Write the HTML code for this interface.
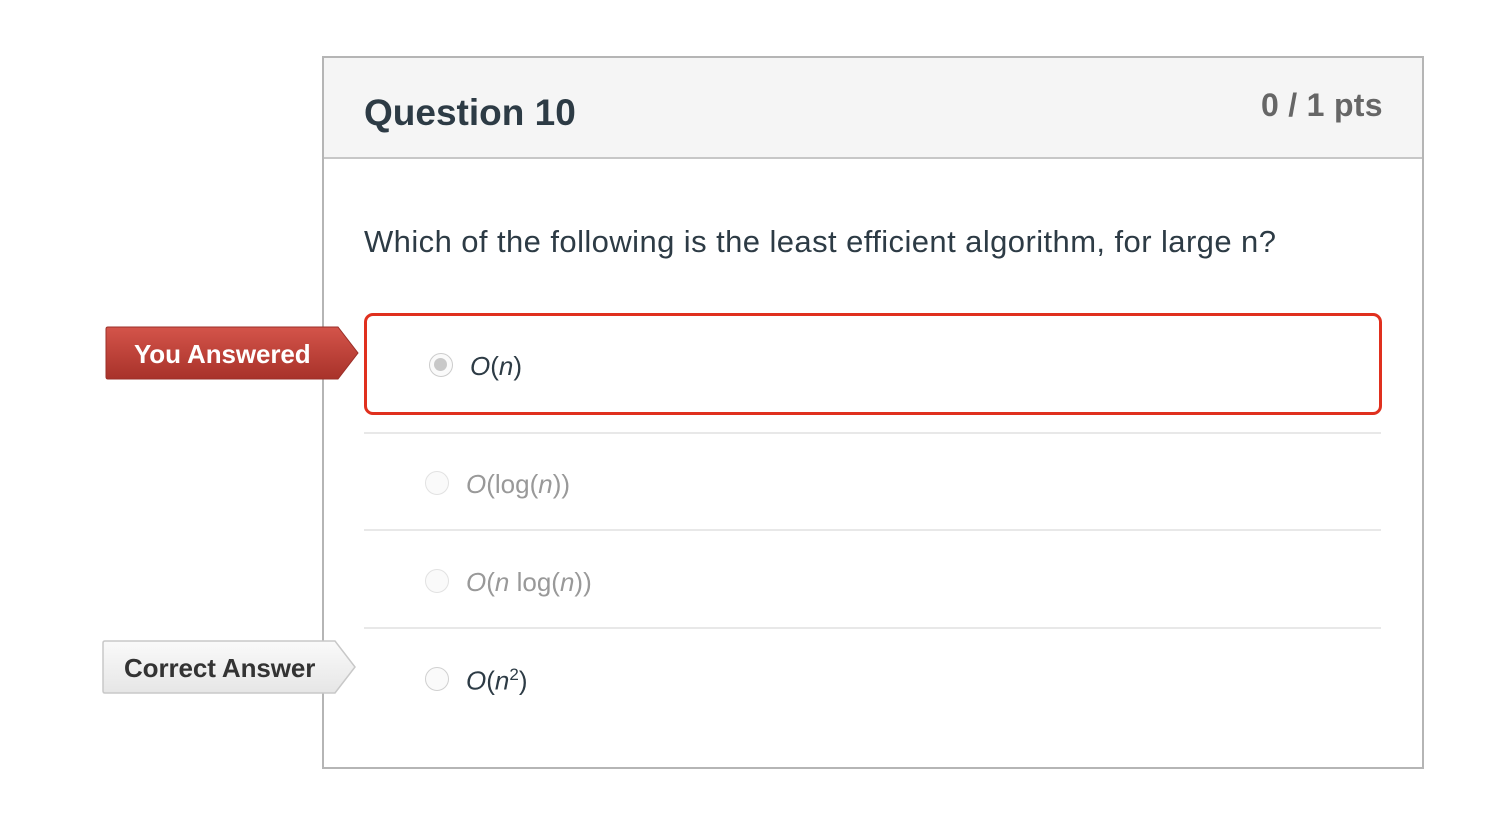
<!DOCTYPE html>
<html><head><style>
body{margin:0;width:1506px;height:826px;background:#fff;font-family:"Liberation Sans",sans-serif;position:relative;overflow:hidden}
.box{position:absolute;left:322px;top:56px;width:1098px;height:709px;border:2px solid #b5b5b5}
.hdr{position:absolute;left:0;top:0;width:1098px;height:99px;background:#f5f5f5;border-bottom:2px solid #c7c7c7}
.t{position:absolute;color:#2d3b45;white-space:nowrap}
.sep{position:absolute;left:364px;width:1017px;height:2px;background:#e8e8e8}
.radio{position:absolute;width:24px;height:24px;border:1.5px solid #d0d0d0;border-radius:50%;background:#fafafa;box-sizing:border-box}
.tag{position:absolute;height:52px;color:#fff;font-weight:bold;font-size:26px;line-height:52px}
</style></head><body>
<div class="box"><div class="hdr"></div></div>
<div class="t" style="left:364px;top:92px;font-size:37px;font-weight:bold">Question 10</div>
<div class="t" style="left:1261px;top:87px;font-size:32px;font-weight:bold;color:#666;letter-spacing:0.3px">0 / 1 pts</div>
<div class="t" style="left:364px;top:224px;font-size:31px;letter-spacing:0.42px">Which of the following is the least efficient algorithm, for large n?</div>
<div style="position:absolute;left:364px;top:313px;width:1012px;height:96px;border:3px solid #e0301e;border-radius:9px"></div>
<div class="radio" style="left:429px;top:353px;border-color:#ccc"><div style="position:absolute;left:4px;top:4px;width:13px;height:13px;border-radius:50%;background:#c8c8c8"></div></div>
<div class="t" style="left:470px;top:351px;font-size:26px"><i>O</i>(<i>n</i>)</div>
<div class="sep" style="top:432px"></div>
<div class="radio" style="left:425px;top:471px;border-color:#e2e2e2"></div>
<div class="t" style="left:466px;top:469px;font-size:26px;color:#999"><i>O</i>(log(<i>n</i>))</div>
<div class="sep" style="top:529px"></div>
<div class="radio" style="left:425px;top:569px;border-color:#e2e2e2"></div>
<div class="t" style="left:466px;top:567px;font-size:26px;color:#999"><i>O</i>(<i>n</i> log(<i>n</i>))</div>
<div class="sep" style="top:627px"></div>
<div class="radio" style="left:425px;top:667px"></div>
<div class="t" style="left:466px;top:665px;font-size:26px"><i>O</i>(<i>n</i><sup style="font-size:17px">2</sup>)</div>
<svg style="position:absolute;left:104px;top:325px" width="258" height="56"><defs><linearGradient id="r" x1="0" y1="0" x2="0" y2="1"><stop offset="0" stop-color="#d4544a"/><stop offset="1" stop-color="#a8322a"/></linearGradient><linearGradient id="g" x1="0" y1="0" x2="0" y2="1"><stop offset="0" stop-color="#fafafa"/><stop offset="1" stop-color="#e6e6e6"/></linearGradient></defs><path d="M4 2H234L254 28L234 54H4Q2 54 2 52V4Q2 2 4 2Z" fill="url(#r)" stroke="#9b2f28" stroke-width="1"/></svg>
<div class="tag" style="left:134px;top:328px;letter-spacing:-0.1px">You Answered</div>
<svg style="position:absolute;left:101px;top:639px" width="258" height="56"><path d="M4 2H234L254 28L234 54H4Q2 54 2 52V4Q2 2 4 2Z" fill="url(#g)" stroke="#c8c8c8" stroke-width="1.5"/></svg>
<div class="tag" style="left:124px;top:642px;color:#333;letter-spacing:-0.1px">Correct Answer</div>
</body></html>
